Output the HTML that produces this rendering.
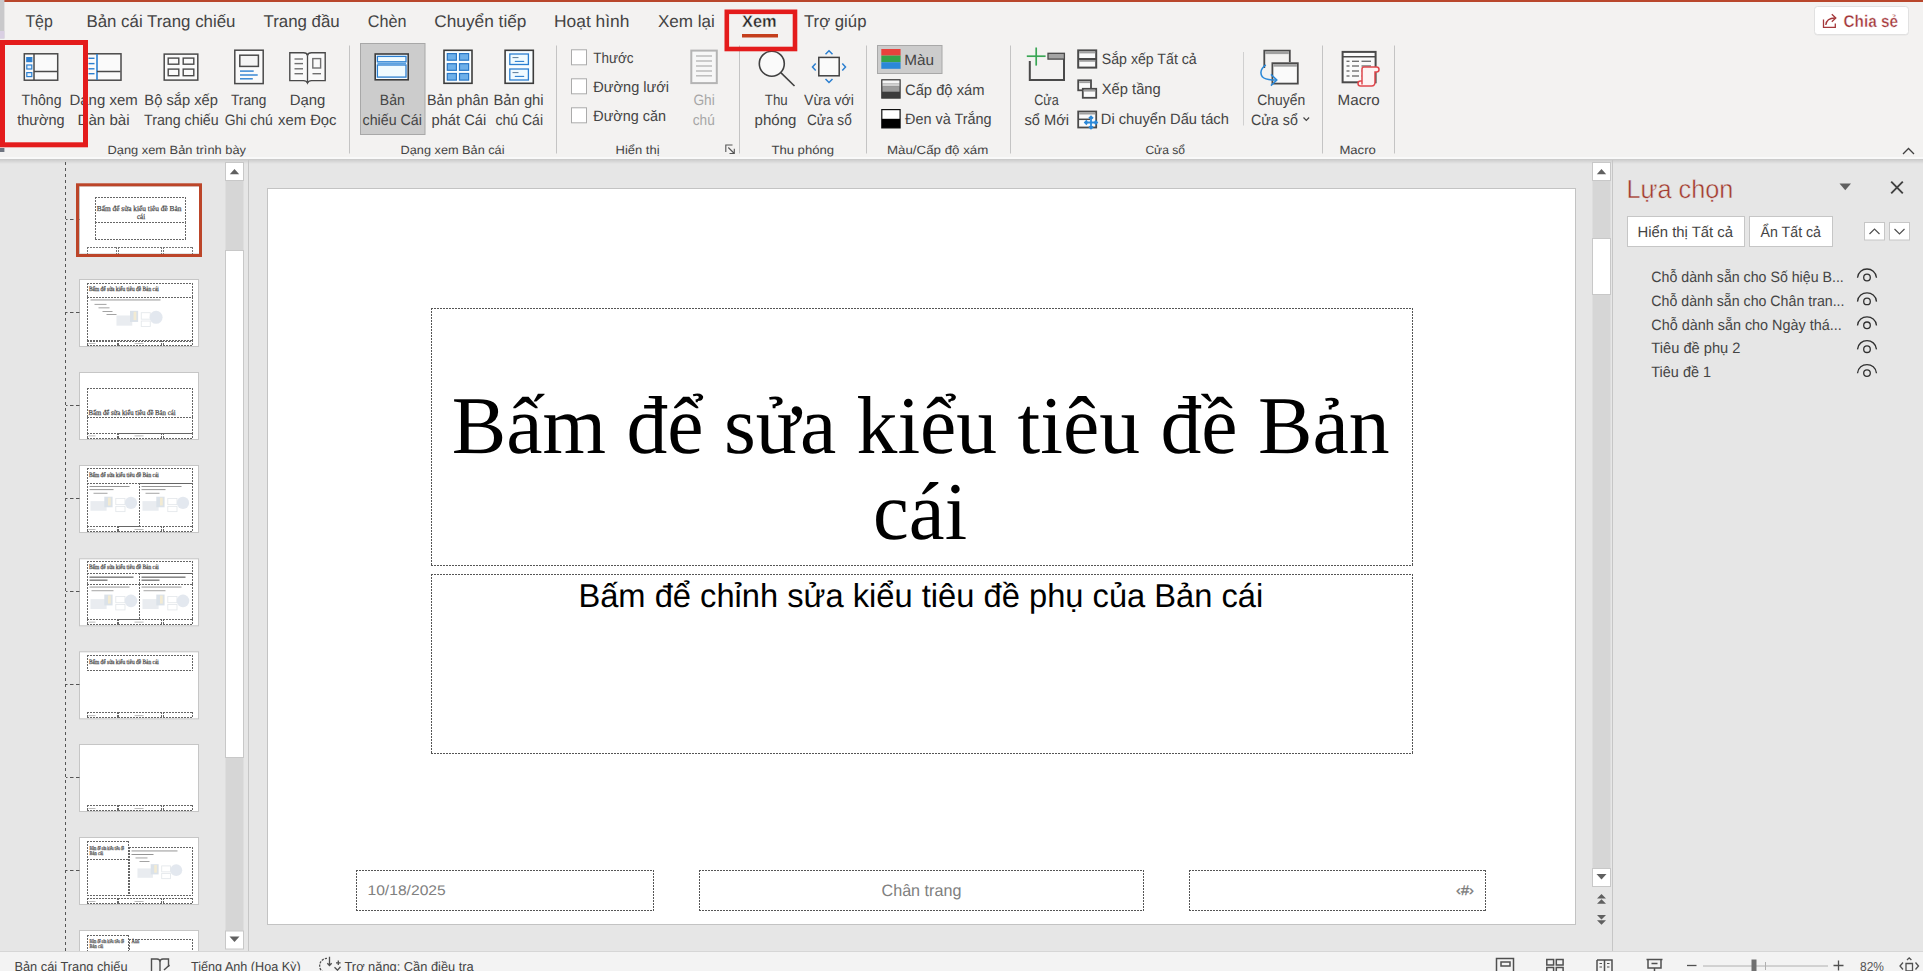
<!DOCTYPE html>
<html><head><meta charset="utf-8"><title>PowerPoint</title>
<style>
html,body{margin:0;padding:0;width:1923px;height:971px;overflow:hidden;background:#e6e6e6;font-family:"Liberation Sans", sans-serif;}
svg{position:absolute;left:0;top:0;display:block}
</style></head><body>
<svg width="1923" height="971" viewBox="0 0 1923 971" text-rendering="geometricPrecision">
<defs><linearGradient id="shadow" x1="0" y1="0" x2="0" y2="1"><stop offset="0" stop-color="#000" stop-opacity="0.13"/><stop offset="1" stop-color="#000" stop-opacity="0"/></linearGradient><linearGradient id="grayg" x1="0" y1="0" x2="0" y2="1"><stop offset="0" stop-color="#f0f0f0"/><stop offset="0.35" stop-color="#d8d8d8"/><stop offset="0.5" stop-color="#9a9a9a"/><stop offset="0.75" stop-color="#505050"/><stop offset="1" stop-color="#383838"/></linearGradient></defs>
<rect x="0" y="0" width="1923" height="159" fill="#f3f2f1" />
<rect x="0" y="157" width="1923" height="2" fill="#f9f9f9" />
<rect x="0" y="0" width="1923" height="2" fill="#b9472c" />
<rect x="0" y="159" width="1923" height="5" fill="url(#shadow)" />
<rect x="742" y="34" width="36" height="3.5" fill="#c43e1c" />
<line x1="349.5" y1="45.5" x2="349.5" y2="153.5" stroke="#c4c4c4" stroke-width="1" />
<line x1="556.5" y1="45.5" x2="556.5" y2="153.5" stroke="#c4c4c4" stroke-width="1" />
<line x1="739.5" y1="45.5" x2="739.5" y2="153.5" stroke="#c4c4c4" stroke-width="1" />
<line x1="866.5" y1="45.5" x2="866.5" y2="153.5" stroke="#c4c4c4" stroke-width="1" />
<line x1="1010.5" y1="45.5" x2="1010.5" y2="153.5" stroke="#c4c4c4" stroke-width="1" />
<line x1="1322.5" y1="45.5" x2="1322.5" y2="153.5" stroke="#c4c4c4" stroke-width="1" />
<line x1="1394.5" y1="45.5" x2="1394.5" y2="153.5" stroke="#c4c4c4" stroke-width="1" />
<line x1="1243.5" y1="52" x2="1243.5" y2="125.5" stroke="#d0d0d0" stroke-width="1" />
<rect x="24.3" y="53.8" width="33.4" height="26.4" fill="#fafafa" stroke="#4a4a4a" stroke-width="1.5" />
<line x1="34" y1="54" x2="34" y2="80" stroke="#4a4a4a" stroke-width="1.5" />
<line x1="34" y1="71.5" x2="57.5" y2="71.5" stroke="#4a4a4a" stroke-width="1.5" />
<rect x="26.8" y="57.6" width="5" height="4" fill="#2b7fd0" stroke="#2b7fd0" stroke-width="1.2" />
<rect x="26.8" y="65" width="5" height="4" fill="#e8f3fc" stroke="#2b7fd0" stroke-width="1.2" />
<rect x="26.8" y="72.6" width="5" height="4" fill="#e8f3fc" stroke="#2b7fd0" stroke-width="1.2" />
<rect x="86.8" y="53.8" width="34.2" height="26.4" fill="#fafafa" stroke="#4a4a4a" stroke-width="1.5" />
<line x1="97" y1="54" x2="97" y2="80" stroke="#2b7fd0" stroke-width="1.6" />
<line x1="97" y1="71.5" x2="120.5" y2="71.5" stroke="#4a4a4a" stroke-width="1.5" />
<line x1="88.5" y1="58.3" x2="94.5" y2="58.3" stroke="#2b7fd0" stroke-width="1.4" />
<line x1="88.5" y1="63.6" x2="94.5" y2="63.6" stroke="#2b7fd0" stroke-width="1.4" />
<line x1="88.5" y1="68.8" x2="94.5" y2="68.8" stroke="#2b7fd0" stroke-width="1.4" />
<line x1="88.5" y1="73.7" x2="94.5" y2="73.7" stroke="#2b7fd0" stroke-width="1.4" />
<rect x="164.2" y="54.1" width="33.6" height="26" fill="#fafafa" stroke="#4a4a4a" stroke-width="1.5" />
<rect x="168.2" y="58.1" width="10.6" height="6.1" fill="#fafafa" stroke="#4a4a4a" stroke-width="1.4" />
<rect x="183.2" y="58.1" width="10.6" height="6.1" fill="#fafafa" stroke="#4a4a4a" stroke-width="1.4" />
<rect x="168.2" y="69.1" width="10.6" height="6.6" fill="#fafafa" stroke="#4a4a4a" stroke-width="1.4" />
<rect x="183.2" y="69.1" width="10.6" height="6.6" fill="#fafafa" stroke="#4a4a4a" stroke-width="1.4" />
<rect x="234.8" y="50.2" width="28.4" height="33.4" fill="#fafafa" stroke="#4a4a4a" stroke-width="1.5" />
<rect x="239.8" y="55.2" width="18.6" height="11.2" fill="#f4f4f4" stroke="#4a4a4a" stroke-width="1.5" />
<line x1="240" y1="71.1" x2="253.7" y2="71.1" stroke="#2b7fd0" stroke-width="1.4" />
<line x1="240" y1="75" x2="257.7" y2="75" stroke="#2b7fd0" stroke-width="1.4" />
<line x1="240" y1="78.8" x2="252.8" y2="78.8" stroke="#2b7fd0" stroke-width="1.4" />
<path d="M289.8 52.8 H303.5 Q307 52.8 307.5 55.5 Q308 52.8 311.5 52.8 H325.2 V80.6 H311.5 Q308.5 80.6 307.5 83 Q306.5 80.6 303.5 80.6 H289.8 Z" stroke="#4a4a4a" fill="#fafafa" stroke-width="1.4" />
<line x1="307.5" y1="55.5" x2="307.5" y2="82.5" stroke="#4a4a4a" stroke-width="1.3" />
<line x1="294.5" y1="59" x2="303" y2="59" stroke="#707070" stroke-width="1.4" />
<line x1="294.5" y1="63.6" x2="303" y2="63.6" stroke="#707070" stroke-width="1.4" />
<line x1="294.5" y1="68.8" x2="303" y2="68.8" stroke="#707070" stroke-width="1.4" />
<line x1="294.5" y1="73.7" x2="303" y2="73.7" stroke="#707070" stroke-width="1.4" />
<rect x="312.8" y="58.6" width="7.8" height="9.4" fill="#fafafa" stroke="#707070" stroke-width="1.4" />
<line x1="312.5" y1="73.7" x2="321" y2="73.7" stroke="#707070" stroke-width="1.4" />
<rect x="360.5" y="43.5" width="64.5" height="91" fill="#cccccc" stroke="#a8a8a8" stroke-width="1" />
<rect x="375.2" y="54" width="33" height="25.8" fill="#f8fdff" stroke="#3c3c3c" stroke-width="1.6" />
<rect x="377.4" y="56.4" width="28.6" height="5.4" fill="#f0fbff" stroke="#2b7fd0" stroke-width="1.3" />
<rect x="377.4" y="62.6" width="28.6" height="1.6" fill="#5aa3e2" />
<rect x="377.4" y="65" width="28.6" height="12.1" fill="#f0fbff" stroke="#2b7fd0" stroke-width="1.3" />
<rect x="444" y="50.3" width="28" height="33" fill="#f8fdff" stroke="#3c3c3c" stroke-width="1.6" />
<rect x="447.3" y="53.6" width="9.1" height="6.6" fill="#6db0ea" stroke="#2a78c6" stroke-width="1.2" />
<rect x="447.3" y="63.7" width="9.1" height="6.6" fill="#6db0ea" stroke="#2a78c6" stroke-width="1.2" />
<rect x="447.3" y="73.5" width="9.1" height="6.6" fill="#6db0ea" stroke="#2a78c6" stroke-width="1.2" />
<rect x="459.5" y="53.6" width="9.1" height="6.6" fill="#6db0ea" stroke="#2a78c6" stroke-width="1.2" />
<rect x="459.5" y="63.7" width="9.1" height="6.6" fill="#6db0ea" stroke="#2a78c6" stroke-width="1.2" />
<rect x="459.5" y="73.5" width="9.1" height="6.6" fill="#6db0ea" stroke="#2a78c6" stroke-width="1.2" />
<rect x="505.1" y="50.3" width="28.2" height="33" fill="#f8fdff" stroke="#3c3c3c" stroke-width="1.6" />
<rect x="509.8" y="54" width="18.6" height="10.5" fill="#f0fbff" stroke="#2b7fd0" stroke-width="1.3" />
<rect x="509.8" y="69" width="18.6" height="11" fill="#f0fbff" stroke="#2b7fd0" stroke-width="1.3" />
<line x1="512.5" y1="57.6" x2="518.5" y2="57.6" stroke="#4a6c8c" stroke-width="0.9" />
<line x1="514.8" y1="61.4" x2="524.2" y2="61.4" stroke="#2b7fd0" stroke-width="1.1" />
<line x1="512.5" y1="72.6" x2="518.5" y2="72.6" stroke="#4a6c8c" stroke-width="0.9" />
<line x1="514.8" y1="76.39999999999999" x2="524.2" y2="76.39999999999999" stroke="#2b7fd0" stroke-width="1.1" />
<rect x="571.5" y="49.8" width="15" height="15" fill="#ffffff" stroke="#ababab" stroke-width="1" />
<rect x="571.5" y="78.8" width="15" height="15" fill="#ffffff" stroke="#ababab" stroke-width="1" />
<rect x="571.5" y="107.8" width="15" height="15" fill="#ffffff" stroke="#ababab" stroke-width="1" />
<rect x="691.3" y="50.6" width="25.5" height="32.5" fill="#f7f7f7" stroke="#b4b4b4" stroke-width="2" />
<line x1="696" y1="56" x2="712" y2="56" stroke="#b8b8b8" stroke-width="1.4" />
<line x1="696" y1="61" x2="712" y2="61" stroke="#b8b8b8" stroke-width="1.4" />
<line x1="696" y1="66" x2="712" y2="66" stroke="#b8b8b8" stroke-width="1.4" />
<line x1="696" y1="71" x2="712" y2="71" stroke="#b8b8b8" stroke-width="1.4" />
<line x1="696" y1="75.8" x2="712" y2="75.8" stroke="#b8b8b8" stroke-width="1.4" />
<path d="M725.8 152 V145 H732.5" stroke="#555" fill="none" stroke-width="1.1" />
<path d="M728.3 147.5 L734.3 153.5 M734.3 148.7 V153.5 H729.5" stroke="#555" fill="none" stroke-width="1.1" />
<circle cx="771.8" cy="63.7" r="12.5" fill="#fafafa" stroke="#404040" stroke-width="1.6"/>
<line x1="780.8" y1="72.6" x2="794.5" y2="86" stroke="#404040" stroke-width="1.6" />
<rect x="818.8" y="57.4" width="20.4" height="18.4" fill="#fafafa" stroke="#404040" stroke-width="1.5" />
<path d="M825.5 54.3 L829 50.8 L832.5 54.3 M825.5 79 L829 82.5 L832.5 79 M815.7 63.5 L812.5 67 L815.7 70.5 M842.3 63.5 L845.5 67 L842.3 70.5" stroke="#2b7fd0" fill="none" stroke-width="1.5" />
<rect x="877.5" y="45.5" width="64.5" height="28" fill="#cccccc" stroke="#a8a8a8" stroke-width="1" />
<rect x="881.3" y="49" width="19.3" height="6.6" fill="#e8413c" />
<rect x="881.3" y="55.6" width="19.3" height="6.6" fill="#36a24a" />
<rect x="881.3" y="62.2" width="19.3" height="6.6" fill="#2b88d8" />
<rect x="881.8" y="79.8" width="18.3" height="18.3" fill="#3c3c3c" stroke="#3a3a3a" stroke-width="1.2" />
<rect x="882.4" y="80.4" width="17.1" height="3.3" fill="#f4f4f4" />
<rect x="882.4" y="83.7" width="17.1" height="2.9" fill="#cfcfcf" />
<rect x="882.4" y="86.6" width="17.1" height="5.1" fill="#9c9c9c" />
<rect x="881.8" y="109.6" width="18.3" height="18.3" fill="#ffffff" stroke="#111" stroke-width="1.2" />
<rect x="881.8" y="118.8" width="18.3" height="9.1" fill="#000" />
<path d="M1029.8 61 V80 H1064 V54 H1048" stroke="#4a4a4a" fill="none" stroke-width="2" />
<rect x="1048" y="53.3" width="16.4" height="5.8" fill="#a4a4a4" stroke="#4a4a4a" stroke-width="1.3" />
<line x1="1026.8" y1="56.2" x2="1045.6" y2="56.2" stroke="#3aa655" stroke-width="1.7" />
<line x1="1036.2" y1="47.5" x2="1036.2" y2="65.6" stroke="#3aa655" stroke-width="1.7" />
<rect x="1078.2" y="50.4" width="18" height="17.2" fill="#fafafa" stroke="#4a4a4a" stroke-width="2" />
<rect x="1079.2" y="51.4" width="16" height="2" fill="#a0a0a0" />
<line x1="1078.2" y1="59" x2="1096.2" y2="59" stroke="#4a4a4a" stroke-width="2" />
<rect x="1079.2" y="60" width="16" height="1.8" fill="#a0a0a0" />
<rect x="1078.2" y="80.3" width="12.8" height="10" fill="#fafafa" stroke="#4a4a4a" stroke-width="1.8" />
<rect x="1079.2" y="81.3" width="10.8" height="1.8" fill="#a0a0a0" />
<rect x="1082.8" y="88.8" width="13.4" height="9" fill="#fafafa" stroke="#4a4a4a" stroke-width="1.8" />
<rect x="1083.8" y="89.8" width="11.4" height="1.8" fill="#a0a0a0" />
<rect x="1078.2" y="111.5" width="18" height="16" fill="#fafafa" stroke="#4a4a4a" stroke-width="1.8" />
<rect x="1079.2" y="112.5" width="16" height="2" fill="#a0a0a0" />
<line x1="1078.2" y1="119.3" x2="1090" y2="119.3" stroke="#4a4a4a" stroke-width="1.5" />
<path d="M1091 116.5 V128.5 M1085 122.5 H1097 M1089 118.5 L1091 116.5 L1093 118.5 M1089 126.5 L1091 128.5 L1093 126.5 M1087 120.5 L1085 122.5 L1087 124.5 M1095 120.5 L1097 122.5 L1095 124.5" stroke="#2b88d8" fill="none" stroke-width="1.8" />
<path d="M1264.3 68 V50.6 H1289.8 V62" stroke="#4a4a4a" fill="none" stroke-width="1.8" />
<rect x="1265.2" y="51.5" width="23.6" height="2.6" fill="#a0a0a0" />
<rect x="1272.4" y="63.2" width="25.4" height="20.4" fill="#fafafa" stroke="#4a4a4a" stroke-width="1.8" />
<rect x="1273.3" y="64.1" width="23.6" height="2.6" fill="#a0a0a0" />
<path d="M1265.8 64.8 Q1258.3 70.5 1262.3 76.8 Q1265.5 80.3 1276.3 80" stroke="#2b88d8" fill="none" stroke-width="1.5" />
<path d="M1270.9 74.4 L1276.8 80 L1270.9 85.6" stroke="#2b88d8" fill="none" stroke-width="1.5" />
<path d="M1303.5 117.5 L1306.3 120.3 L1309.1 117.5" stroke="#444" fill="none" stroke-width="1.2" />
<rect x="1342.6" y="51.9" width="33" height="30.4" fill="#fafafa" stroke="#4a4a4a" stroke-width="2" />
<line x1="1342.6" y1="56.8" x2="1375.6" y2="56.8" stroke="#4a4a4a" stroke-width="1.6" />
<line x1="1346.5" y1="61.3" x2="1349.5" y2="61.3" stroke="#707070" stroke-width="1.4" />
<line x1="1352" y1="61.3" x2="1359" y2="61.3" stroke="#707070" stroke-width="1.4" />
<line x1="1361.5" y1="61.3" x2="1371" y2="61.3" stroke="#707070" stroke-width="1.4" />
<line x1="1346.5" y1="66" x2="1349.5" y2="66" stroke="#707070" stroke-width="1.4" />
<line x1="1352" y1="66" x2="1359" y2="66" stroke="#707070" stroke-width="1.4" />
<line x1="1361.5" y1="66" x2="1371" y2="66" stroke="#707070" stroke-width="1.4" />
<line x1="1346.5" y1="71" x2="1349.5" y2="71" stroke="#707070" stroke-width="1.4" />
<line x1="1352" y1="71" x2="1359" y2="71" stroke="#707070" stroke-width="1.4" />
<line x1="1361.5" y1="71" x2="1371" y2="71" stroke="#707070" stroke-width="1.4" />
<line x1="1346.5" y1="76" x2="1349.5" y2="76" stroke="#707070" stroke-width="1.4" />
<line x1="1352" y1="76" x2="1359" y2="76" stroke="#707070" stroke-width="1.4" />
<line x1="1361.5" y1="76" x2="1371" y2="76" stroke="#707070" stroke-width="1.4" />
<path d="M1362 84.5 V69 Q1362 67 1364 67 H1376.5 Q1379 67 1379 69.5 Q1379 72 1376.5 72 H1375 V82 Q1375 86 1371.5 86 H1360.5 Q1358 86 1358 83.5 Q1358 81 1360.5 81 H1362" stroke="#e0474c" fill="#fdf3f3" stroke-width="1.5" />
<rect x="1814.5" y="7" width="94" height="28.5" rx="3" fill="#000" opacity="0.06"/>
<rect x="1814.5" y="6.5" width="94" height="28" rx="3" fill="#ffffff" stroke="#e1e1e1" stroke-width="1"/>
<path d="M1823.5 19.5 V27.3 H1835.3 V23.5" stroke="#a4373a" fill="none" stroke-width="1.3" />
<path d="M1825.8 25 Q1826.5 18 1835 18" stroke="#a4373a" fill="none" stroke-width="1.3" />
<path d="M1831.8 14.3 L1835.8 18 L1831.8 21.7" stroke="#a4373a" fill="none" stroke-width="1.3" />
<path d="M1903 154 L1908.5 148.5 L1914 154" stroke="#404040" fill="none" stroke-width="1.3" />
<line x1="65.5" y1="161" x2="65.5" y2="951" stroke="#555" stroke-width="1" stroke-dasharray="3 3" stroke-dashoffset="5"/>
<rect x="248" y="160" width="1" height="791" fill="#c6c6c6" />
<rect x="225.5" y="181" width="18" height="750" fill="#d6d6d6" />
<rect x="225.5" y="162.5" width="18" height="18" fill="#ffffff" stroke="#c8c8c8" stroke-width="1" />
<path d="M229.8 174.3 L234.5 169 L239.2 174.3 Z" stroke="none" fill="#606060" stroke-width="1" />
<rect x="225.5" y="250.5" width="18" height="507" fill="#ffffff" stroke="#c8c8c8" stroke-width="1" />
<rect x="225.5" y="931" width="18" height="18" fill="#ffffff" stroke="#c8c8c8" stroke-width="1" />
<path d="M229.5 936.5 L234.5 942 L239.5 936.5 Z" stroke="none" fill="#606060" stroke-width="1" />
<rect x="79.5" y="186" width="120" height="68" fill="#ffffff" stroke="#c6c6c6" stroke-width="1" />
<line x1="66" y1="219.5" x2="79.5" y2="219.5" stroke="#555" stroke-width="1" stroke-dasharray="1.5 2.5 3.5 2.5 3.5"/>
<rect x="79.5" y="279.5" width="119" height="67" fill="#ffffff" stroke="#c6c6c6" stroke-width="1" />
<line x1="66" y1="312.5" x2="79.5" y2="312.5" stroke="#555" stroke-width="1" stroke-dasharray="1.5 2.5 3.5 2.5 3.5"/>
<rect x="79.5" y="372.5" width="119" height="67" fill="#ffffff" stroke="#c6c6c6" stroke-width="1" />
<line x1="66" y1="405.5" x2="79.5" y2="405.5" stroke="#555" stroke-width="1" stroke-dasharray="1.5 2.5 3.5 2.5 3.5"/>
<rect x="79.5" y="465.5" width="119" height="67" fill="#ffffff" stroke="#c6c6c6" stroke-width="1" />
<line x1="66" y1="498.5" x2="79.5" y2="498.5" stroke="#555" stroke-width="1" stroke-dasharray="1.5 2.5 3.5 2.5 3.5"/>
<rect x="79.5" y="558.8" width="119" height="67" fill="#ffffff" stroke="#c6c6c6" stroke-width="1" />
<line x1="66" y1="591.5" x2="79.5" y2="591.5" stroke="#555" stroke-width="1" stroke-dasharray="1.5 2.5 3.5 2.5 3.5"/>
<rect x="79.5" y="651.8" width="119" height="67" fill="#ffffff" stroke="#c6c6c6" stroke-width="1" />
<line x1="66" y1="684.5" x2="79.5" y2="684.5" stroke="#555" stroke-width="1" stroke-dasharray="1.5 2.5 3.5 2.5 3.5"/>
<rect x="79.5" y="744.5" width="119" height="67" fill="#ffffff" stroke="#c6c6c6" stroke-width="1" />
<line x1="66" y1="777.5" x2="79.5" y2="777.5" stroke="#555" stroke-width="1" stroke-dasharray="1.5 2.5 3.5 2.5 3.5"/>
<rect x="79.5" y="837.5" width="119" height="67" fill="#ffffff" stroke="#c6c6c6" stroke-width="1" />
<line x1="66" y1="870.5" x2="79.5" y2="870.5" stroke="#555" stroke-width="1" stroke-dasharray="1.5 2.5 3.5 2.5 3.5"/>
<rect x="79.5" y="930.5" width="119" height="67" fill="#ffffff" stroke="#c6c6c6" stroke-width="1" />
<line x1="66" y1="963.5" x2="79.5" y2="963.5" stroke="#555" stroke-width="1" stroke-dasharray="1.5 2.5 3.5 2.5 3.5"/>
<g stroke="#666" stroke-width="1" fill="none" stroke-dasharray="2 1"><line x1="95" y1="197.5" x2="186" y2="197.5"/><line x1="95" y1="222.5" x2="186" y2="222.5"/><line x1="95.5" y1="197" x2="95.5" y2="223"/><line x1="185.5" y1="197" x2="185.5" y2="223"/></g>
<g stroke="#666" stroke-width="1" fill="none" stroke-dasharray="2 1"><line x1="95" y1="222.5" x2="186" y2="222.5"/><line x1="95" y1="239.5" x2="186" y2="239.5"/><line x1="95.5" y1="222" x2="95.5" y2="240"/><line x1="185.5" y1="222" x2="185.5" y2="240"/></g>
<g stroke="#777" stroke-width="1" fill="none" stroke-dasharray="2 1"><line x1="87" y1="247.5" x2="117" y2="247.5"/><line x1="87" y1="256.5" x2="117" y2="256.5"/><line x1="87.5" y1="247" x2="87.5" y2="257"/><line x1="116.5" y1="247" x2="116.5" y2="257"/></g>
<g stroke="#777" stroke-width="1" fill="none" stroke-dasharray="2 1"><line x1="118" y1="247.5" x2="162" y2="247.5"/><line x1="118" y1="256.5" x2="162" y2="256.5"/><line x1="118.5" y1="247" x2="118.5" y2="257"/><line x1="161.5" y1="247" x2="161.5" y2="257"/></g>
<g stroke="#777" stroke-width="1" fill="none" stroke-dasharray="2 1"><line x1="163" y1="247.5" x2="193" y2="247.5"/><line x1="163" y1="256.5" x2="193" y2="256.5"/><line x1="163.5" y1="247" x2="163.5" y2="257"/><line x1="192.5" y1="247" x2="192.5" y2="257"/></g>
<g stroke="#666" stroke-width="1" fill="none" stroke-dasharray="2 1"><line x1="87" y1="283.5" x2="193" y2="283.5"/><line x1="87" y1="297.5" x2="193" y2="297.5"/><line x1="87.5" y1="283" x2="87.5" y2="298"/><line x1="192.5" y1="283" x2="192.5" y2="298"/></g>
<g stroke="#666" stroke-width="1" fill="none" stroke-dasharray="2 1"><line x1="87" y1="297.5" x2="193" y2="297.5"/><line x1="87" y1="341.5" x2="193" y2="341.5"/><line x1="87.5" y1="297" x2="87.5" y2="342"/><line x1="192.5" y1="297" x2="192.5" y2="342"/></g>
<rect x="90.5" y="299.5" width="70" height="0.9" fill="#8a8a8a" />
<rect x="94.5" y="303.9" width="12" height="0.9" fill="#9a9a9a" />
<rect x="98.5" y="307.4" width="11" height="0.9" fill="#9a9a9a" />
<rect x="102.5" y="311.0" width="10" height="0.9" fill="#9a9a9a" />
<rect x="106.5" y="314.0" width="10" height="0.9" fill="#9a9a9a" />
<g opacity="0.5"><rect x="116.5" y="315.475" width="15.749999999999998" height="10.175" fill="#d4dbe3"/><rect x="130.0" y="310.85" width="8.1" height="11.1" fill="#b9c6d4"/><rect x="133.6" y="311.775" width="2.6999999999999997" height="8.325000000000001" fill="#e8d9a8"/><rect x="141.25" y="312.7" width="9.0" height="6.475" fill="none" stroke="#c8d0d8" stroke-width="0.8"/><rect x="141.25" y="321.025" width="9.0" height="5.55" fill="none" stroke="#c8d0d8" stroke-width="0.8"/><circle cx="156.1" cy="317.325" r="6.475" fill="#c9d3e0"/></g>
<g stroke="#666" stroke-width="1" fill="none" stroke-dasharray="2 1"><line x1="87" y1="340.5" x2="118" y2="340.5"/><line x1="87" y1="345.5" x2="118" y2="345.5"/><line x1="87.5" y1="340" x2="87.5" y2="346"/><line x1="117.5" y1="340" x2="117.5" y2="346"/></g>
<g stroke="#666" stroke-width="1" fill="none" stroke-dasharray="2 1"><line x1="118" y1="340.5" x2="162" y2="340.5"/><line x1="118" y1="345.5" x2="162" y2="345.5"/><line x1="118.5" y1="340" x2="118.5" y2="346"/><line x1="161.5" y1="340" x2="161.5" y2="346"/></g>
<g stroke="#666" stroke-width="1" fill="none" stroke-dasharray="2 1"><line x1="163" y1="340.5" x2="193" y2="340.5"/><line x1="163" y1="345.5" x2="193" y2="345.5"/><line x1="163.5" y1="340" x2="163.5" y2="346"/><line x1="192.5" y1="340" x2="192.5" y2="346"/></g>
<rect x="88.5" y="343.0" width="7" height="0.8" fill="#aaa" />
<rect x="134.5" y="343.0" width="9" height="0.8" fill="#aaa" />
<g stroke="#666" stroke-width="1" fill="none" stroke-dasharray="2 1"><line x1="87" y1="388.5" x2="193" y2="388.5"/><line x1="87" y1="417.5" x2="193" y2="417.5"/><line x1="87.5" y1="388" x2="87.5" y2="418"/><line x1="192.5" y1="388" x2="192.5" y2="418"/></g>
<g stroke="#666" stroke-width="1" fill="none" stroke-dasharray="2 1"><line x1="87" y1="417.5" x2="193" y2="417.5"/><line x1="87" y1="433.5" x2="193" y2="433.5"/><line x1="87.5" y1="417" x2="87.5" y2="434"/><line x1="192.5" y1="417" x2="192.5" y2="434"/></g>
<g stroke="#666" stroke-width="1" fill="none" stroke-dasharray="2 1"><line x1="87" y1="433.5" x2="118" y2="433.5"/><line x1="87" y1="438.5" x2="118" y2="438.5"/><line x1="87.5" y1="433" x2="87.5" y2="439"/><line x1="117.5" y1="433" x2="117.5" y2="439"/></g>
<g stroke="#666" stroke-width="1" fill="none" stroke-dasharray="2 1"><line x1="118" y1="433.5" x2="162" y2="433.5"/><line x1="118" y1="438.5" x2="162" y2="438.5"/><line x1="118.5" y1="433" x2="118.5" y2="439"/><line x1="161.5" y1="433" x2="161.5" y2="439"/></g>
<g stroke="#666" stroke-width="1" fill="none" stroke-dasharray="2 1"><line x1="163" y1="433.5" x2="193" y2="433.5"/><line x1="163" y1="438.5" x2="193" y2="438.5"/><line x1="163.5" y1="433" x2="163.5" y2="439"/><line x1="192.5" y1="433" x2="192.5" y2="439"/></g>
<rect x="88.5" y="435.5" width="7" height="0.8" fill="#aaa" />
<rect x="134.5" y="435.5" width="9" height="0.8" fill="#aaa" />
<g stroke="#666" stroke-width="1" fill="none" stroke-dasharray="2 1"><line x1="87" y1="468.5" x2="193" y2="468.5"/><line x1="87" y1="483.5" x2="193" y2="483.5"/><line x1="87.5" y1="468" x2="87.5" y2="484"/><line x1="192.5" y1="468" x2="192.5" y2="484"/></g>
<g stroke="#666" stroke-width="1" fill="none" stroke-dasharray="2 1"><line x1="87" y1="483.5" x2="140" y2="483.5"/><line x1="87" y1="526.5" x2="140" y2="526.5"/><line x1="87.5" y1="483" x2="87.5" y2="527"/><line x1="139.5" y1="483" x2="139.5" y2="527"/></g>
<g stroke="#666" stroke-width="1" fill="none" stroke-dasharray="2 1"><line x1="139" y1="483.5" x2="193" y2="483.5"/><line x1="139" y1="526.5" x2="193" y2="526.5"/><line x1="139.5" y1="483" x2="139.5" y2="527"/><line x1="192.5" y1="483" x2="192.5" y2="527"/></g>
<rect x="89.5" y="486.0" width="40" height="0.9" fill="#8a8a8a" />
<rect x="89.5" y="489.2" width="24" height="0.9" fill="#8a8a8a" />
<rect x="93.5" y="492.8" width="14" height="0.9" fill="#9a9a9a" />
<g opacity="0.5"><rect x="90.5" y="501.125" width="16.099999999999998" height="9.625" fill="#d4dbe3"/><rect x="104.3" y="496.75" width="8.28" height="10.5" fill="#b9c6d4"/><rect x="107.98" y="497.625" width="2.76" height="7.875" fill="#e8d9a8"/><rect x="115.8" y="498.5" width="9.200000000000001" height="6.125" fill="none" stroke="#c8d0d8" stroke-width="0.8"/><rect x="115.8" y="506.375" width="9.200000000000001" height="5.25" fill="none" stroke="#c8d0d8" stroke-width="0.8"/><circle cx="130.98" cy="502.875" r="6.125" fill="#c9d3e0"/></g>
<rect x="141.5" y="486.0" width="40" height="0.9" fill="#8a8a8a" />
<rect x="141.5" y="489.2" width="24" height="0.9" fill="#8a8a8a" />
<rect x="145.5" y="492.8" width="14" height="0.9" fill="#9a9a9a" />
<g opacity="0.5"><rect x="142.5" y="501.125" width="16.099999999999998" height="9.625" fill="#d4dbe3"/><rect x="156.3" y="496.75" width="8.28" height="10.5" fill="#b9c6d4"/><rect x="159.98" y="497.625" width="2.76" height="7.875" fill="#e8d9a8"/><rect x="167.8" y="498.5" width="9.200000000000001" height="6.125" fill="none" stroke="#c8d0d8" stroke-width="0.8"/><rect x="167.8" y="506.375" width="9.200000000000001" height="5.25" fill="none" stroke="#c8d0d8" stroke-width="0.8"/><circle cx="182.98" cy="502.875" r="6.125" fill="#c9d3e0"/></g>
<g stroke="#666" stroke-width="1" fill="none" stroke-dasharray="2 1"><line x1="87" y1="526.5" x2="118" y2="526.5"/><line x1="87" y1="531.5" x2="118" y2="531.5"/><line x1="87.5" y1="526" x2="87.5" y2="532"/><line x1="117.5" y1="526" x2="117.5" y2="532"/></g>
<g stroke="#666" stroke-width="1" fill="none" stroke-dasharray="2 1"><line x1="118" y1="526.5" x2="162" y2="526.5"/><line x1="118" y1="531.5" x2="162" y2="531.5"/><line x1="118.5" y1="526" x2="118.5" y2="532"/><line x1="161.5" y1="526" x2="161.5" y2="532"/></g>
<g stroke="#666" stroke-width="1" fill="none" stroke-dasharray="2 1"><line x1="163" y1="526.5" x2="193" y2="526.5"/><line x1="163" y1="531.5" x2="193" y2="531.5"/><line x1="163.5" y1="526" x2="163.5" y2="532"/><line x1="192.5" y1="526" x2="192.5" y2="532"/></g>
<rect x="88.5" y="529.0" width="7" height="0.8" fill="#aaa" />
<rect x="134.5" y="529.0" width="9" height="0.8" fill="#aaa" />
<g stroke="#666" stroke-width="1" fill="none" stroke-dasharray="2 1"><line x1="87" y1="561.5" x2="193" y2="561.5"/><line x1="87" y1="573.5" x2="193" y2="573.5"/><line x1="87.5" y1="561" x2="87.5" y2="574"/><line x1="192.5" y1="561" x2="192.5" y2="574"/></g>
<g stroke="#666" stroke-width="1" fill="none" stroke-dasharray="2 1"><line x1="87" y1="573.5" x2="140" y2="573.5"/><line x1="87" y1="584.5" x2="140" y2="584.5"/><line x1="87.5" y1="573" x2="87.5" y2="585"/><line x1="139.5" y1="573" x2="139.5" y2="585"/></g>
<g stroke="#666" stroke-width="1" fill="none" stroke-dasharray="2 1"><line x1="139" y1="573.5" x2="193" y2="573.5"/><line x1="139" y1="584.5" x2="193" y2="584.5"/><line x1="139.5" y1="573" x2="139.5" y2="585"/><line x1="192.5" y1="573" x2="192.5" y2="585"/></g>
<g stroke="#666" stroke-width="1" fill="none" stroke-dasharray="2 1"><line x1="87" y1="584.5" x2="140" y2="584.5"/><line x1="87" y1="619.5" x2="140" y2="619.5"/><line x1="87.5" y1="584" x2="87.5" y2="620"/><line x1="139.5" y1="584" x2="139.5" y2="620"/></g>
<g stroke="#666" stroke-width="1" fill="none" stroke-dasharray="2 1"><line x1="139" y1="584.5" x2="193" y2="584.5"/><line x1="139" y1="619.5" x2="193" y2="619.5"/><line x1="139.5" y1="584" x2="139.5" y2="620"/><line x1="192.5" y1="584" x2="192.5" y2="620"/></g>
<rect x="89.5" y="576.5999999999999" width="44" height="1.1" fill="#555" />
<rect x="89.5" y="579.5999999999999" width="18" height="1.1" fill="#555" />
<rect x="89.5" y="586.5999999999999" width="40" height="0.9" fill="#8a8a8a" />
<rect x="91.5" y="590.3" width="22" height="0.9" fill="#9a9a9a" />
<g opacity="0.5"><rect x="90.5" y="599.0999999999999" width="16.099999999999998" height="9.9" fill="#d4dbe3"/><rect x="104.3" y="594.5999999999999" width="8.28" height="10.799999999999999" fill="#b9c6d4"/><rect x="107.98" y="595.5" width="2.76" height="8.1" fill="#e8d9a8"/><rect x="115.8" y="596.4" width="9.200000000000001" height="6.3" fill="none" stroke="#c8d0d8" stroke-width="0.8"/><rect x="115.8" y="604.5" width="9.200000000000001" height="5.3999999999999995" fill="none" stroke="#c8d0d8" stroke-width="0.8"/><circle cx="130.98" cy="600.9" r="6.3" fill="#c9d3e0"/></g>
<rect x="141.5" y="576.5999999999999" width="44" height="1.1" fill="#555" />
<rect x="141.5" y="579.5999999999999" width="18" height="1.1" fill="#555" />
<rect x="141.5" y="586.5999999999999" width="40" height="0.9" fill="#8a8a8a" />
<rect x="143.5" y="590.3" width="22" height="0.9" fill="#9a9a9a" />
<g opacity="0.5"><rect x="142.5" y="599.0999999999999" width="16.099999999999998" height="9.9" fill="#d4dbe3"/><rect x="156.3" y="594.5999999999999" width="8.28" height="10.799999999999999" fill="#b9c6d4"/><rect x="159.98" y="595.5" width="2.76" height="8.1" fill="#e8d9a8"/><rect x="167.8" y="596.4" width="9.200000000000001" height="6.3" fill="none" stroke="#c8d0d8" stroke-width="0.8"/><rect x="167.8" y="604.5" width="9.200000000000001" height="5.3999999999999995" fill="none" stroke="#c8d0d8" stroke-width="0.8"/><circle cx="182.98" cy="600.9" r="6.3" fill="#c9d3e0"/></g>
<g stroke="#666" stroke-width="1" fill="none" stroke-dasharray="2 1"><line x1="87" y1="619.5" x2="118" y2="619.5"/><line x1="87" y1="624.5" x2="118" y2="624.5"/><line x1="87.5" y1="619" x2="87.5" y2="625"/><line x1="117.5" y1="619" x2="117.5" y2="625"/></g>
<g stroke="#666" stroke-width="1" fill="none" stroke-dasharray="2 1"><line x1="118" y1="619.5" x2="162" y2="619.5"/><line x1="118" y1="624.5" x2="162" y2="624.5"/><line x1="118.5" y1="619" x2="118.5" y2="625"/><line x1="161.5" y1="619" x2="161.5" y2="625"/></g>
<g stroke="#666" stroke-width="1" fill="none" stroke-dasharray="2 1"><line x1="163" y1="619.5" x2="193" y2="619.5"/><line x1="163" y1="624.5" x2="193" y2="624.5"/><line x1="163.5" y1="619" x2="163.5" y2="625"/><line x1="192.5" y1="619" x2="192.5" y2="625"/></g>
<rect x="88.5" y="621.6999999999999" width="7" height="0.8" fill="#aaa" />
<rect x="134.5" y="621.6999999999999" width="9" height="0.8" fill="#aaa" />
<g stroke="#666" stroke-width="1" fill="none" stroke-dasharray="2 1"><line x1="87" y1="655.5" x2="193" y2="655.5"/><line x1="87" y1="670.5" x2="193" y2="670.5"/><line x1="87.5" y1="655" x2="87.5" y2="671"/><line x1="192.5" y1="655" x2="192.5" y2="671"/></g>
<g stroke="#666" stroke-width="1" fill="none" stroke-dasharray="2 1"><line x1="87" y1="712.5" x2="118" y2="712.5"/><line x1="87" y1="717.5" x2="118" y2="717.5"/><line x1="87.5" y1="712" x2="87.5" y2="718"/><line x1="117.5" y1="712" x2="117.5" y2="718"/></g>
<g stroke="#666" stroke-width="1" fill="none" stroke-dasharray="2 1"><line x1="118" y1="712.5" x2="162" y2="712.5"/><line x1="118" y1="717.5" x2="162" y2="717.5"/><line x1="118.5" y1="712" x2="118.5" y2="718"/><line x1="161.5" y1="712" x2="161.5" y2="718"/></g>
<g stroke="#666" stroke-width="1" fill="none" stroke-dasharray="2 1"><line x1="163" y1="712.5" x2="193" y2="712.5"/><line x1="163" y1="717.5" x2="193" y2="717.5"/><line x1="163.5" y1="712" x2="163.5" y2="718"/><line x1="192.5" y1="712" x2="192.5" y2="718"/></g>
<rect x="88.5" y="715.3" width="7" height="0.8" fill="#aaa" />
<rect x="134.5" y="715.3" width="9" height="0.8" fill="#aaa" />
<g stroke="#666" stroke-width="1" fill="none" stroke-dasharray="2 1"><line x1="87" y1="805.5" x2="118" y2="805.5"/><line x1="87" y1="810.5" x2="118" y2="810.5"/><line x1="87.5" y1="805" x2="87.5" y2="811"/><line x1="117.5" y1="805" x2="117.5" y2="811"/></g>
<g stroke="#666" stroke-width="1" fill="none" stroke-dasharray="2 1"><line x1="118" y1="805.5" x2="162" y2="805.5"/><line x1="118" y1="810.5" x2="162" y2="810.5"/><line x1="118.5" y1="805" x2="118.5" y2="811"/><line x1="161.5" y1="805" x2="161.5" y2="811"/></g>
<g stroke="#666" stroke-width="1" fill="none" stroke-dasharray="2 1"><line x1="163" y1="805.5" x2="193" y2="805.5"/><line x1="163" y1="810.5" x2="193" y2="810.5"/><line x1="163.5" y1="805" x2="163.5" y2="811"/><line x1="192.5" y1="805" x2="192.5" y2="811"/></g>
<rect x="88.5" y="808.0" width="7" height="0.8" fill="#aaa" />
<rect x="134.5" y="808.0" width="9" height="0.8" fill="#aaa" />
<g stroke="#666" stroke-width="1" fill="none" stroke-dasharray="2 1"><line x1="87" y1="841.5" x2="129" y2="841.5"/><line x1="87" y1="859.5" x2="129" y2="859.5"/><line x1="87.5" y1="841" x2="87.5" y2="860"/><line x1="128.5" y1="841" x2="128.5" y2="860"/></g>
<g stroke="#666" stroke-width="1" fill="none" stroke-dasharray="2 1"><line x1="87" y1="859.5" x2="129" y2="859.5"/><line x1="87" y1="895.5" x2="129" y2="895.5"/><line x1="87.5" y1="859" x2="87.5" y2="896"/><line x1="128.5" y1="859" x2="128.5" y2="896"/></g>
<g stroke="#666" stroke-width="1" fill="none" stroke-dasharray="2 1"><line x1="129" y1="847.5" x2="193" y2="847.5"/><line x1="129" y1="895.5" x2="193" y2="895.5"/><line x1="129.5" y1="847" x2="129.5" y2="896"/><line x1="192.5" y1="847" x2="192.5" y2="896"/></g>
<rect x="131.5" y="850.5" width="46" height="0.9" fill="#8a8a8a" />
<rect x="131.5" y="854.0" width="22" height="0.9" fill="#8a8a8a" />
<rect x="135.5" y="857.5" width="12" height="0.9" fill="#9a9a9a" />
<rect x="139.5" y="861.0" width="10" height="0.9" fill="#9a9a9a" />
<g opacity="0.5"><rect x="137.5" y="868.45" width="15.399999999999999" height="9.350000000000001" fill="#d4dbe3"/><rect x="150.7" y="864.2" width="7.92" height="10.2" fill="#b9c6d4"/><rect x="154.22" y="865.05" width="2.6399999999999997" height="7.65" fill="#e8d9a8"/><rect x="161.7" y="865.9" width="8.8" height="5.949999999999999" fill="none" stroke="#c8d0d8" stroke-width="0.8"/><rect x="161.7" y="873.55" width="8.8" height="5.1" fill="none" stroke="#c8d0d8" stroke-width="0.8"/><circle cx="176.22" cy="870.15" r="5.949999999999999" fill="#c9d3e0"/></g>
<g stroke="#666" stroke-width="1" fill="none" stroke-dasharray="2 1"><line x1="87" y1="898.5" x2="118" y2="898.5"/><line x1="87" y1="903.5" x2="118" y2="903.5"/><line x1="87.5" y1="898" x2="87.5" y2="904"/><line x1="117.5" y1="898" x2="117.5" y2="904"/></g>
<g stroke="#666" stroke-width="1" fill="none" stroke-dasharray="2 1"><line x1="118" y1="898.5" x2="162" y2="898.5"/><line x1="118" y1="903.5" x2="162" y2="903.5"/><line x1="118.5" y1="898" x2="118.5" y2="904"/><line x1="161.5" y1="898" x2="161.5" y2="904"/></g>
<g stroke="#666" stroke-width="1" fill="none" stroke-dasharray="2 1"><line x1="163" y1="898.5" x2="193" y2="898.5"/><line x1="163" y1="903.5" x2="193" y2="903.5"/><line x1="163.5" y1="898" x2="163.5" y2="904"/><line x1="192.5" y1="898" x2="192.5" y2="904"/></g>
<rect x="88.5" y="901.0" width="7" height="0.8" fill="#aaa" />
<rect x="134.5" y="901.0" width="9" height="0.8" fill="#aaa" />
<g stroke="#666" stroke-width="1" fill="none" stroke-dasharray="2 1"><line x1="87" y1="935.5" x2="129" y2="935.5"/><line x1="87" y1="952.5" x2="129" y2="952.5"/><line x1="87.5" y1="935" x2="87.5" y2="953"/><line x1="128.5" y1="935" x2="128.5" y2="953"/></g>
<g stroke="#666" stroke-width="1" fill="none" stroke-dasharray="2 1"><line x1="129" y1="939.5" x2="193" y2="939.5"/><line x1="129" y1="970.5" x2="193" y2="970.5"/><line x1="129.5" y1="939" x2="129.5" y2="971"/><line x1="192.5" y1="939" x2="192.5" y2="971"/></g>
<rect x="267.5" y="188.5" width="1308" height="736" fill="#ffffff" stroke="#c3c3c3" stroke-width="1" />
<g stroke="#555" stroke-width="1" fill="none" stroke-dasharray="2 1"><line x1="431" y1="308.5" x2="1413" y2="308.5"/><line x1="431" y1="565.5" x2="1413" y2="565.5"/><line x1="431.5" y1="308" x2="431.5" y2="566"/><line x1="1412.5" y1="308" x2="1412.5" y2="566"/></g>
<g stroke="#555" stroke-width="1" fill="none" stroke-dasharray="2 1"><line x1="431" y1="574.5" x2="1413" y2="574.5"/><line x1="431" y1="753.5" x2="1413" y2="753.5"/><line x1="431.5" y1="574" x2="431.5" y2="754"/><line x1="1412.5" y1="574" x2="1412.5" y2="754"/></g>
<g stroke="#555" stroke-width="1" fill="none" stroke-dasharray="2 1"><line x1="356" y1="870.5" x2="654" y2="870.5"/><line x1="356" y1="910.5" x2="654" y2="910.5"/><line x1="356.5" y1="870" x2="356.5" y2="911"/><line x1="653.5" y1="870" x2="653.5" y2="911"/></g>
<g stroke="#555" stroke-width="1" fill="none" stroke-dasharray="2 1"><line x1="699" y1="870.5" x2="1144" y2="870.5"/><line x1="699" y1="910.5" x2="1144" y2="910.5"/><line x1="699.5" y1="870" x2="699.5" y2="911"/><line x1="1143.5" y1="870" x2="1143.5" y2="911"/></g>
<g stroke="#555" stroke-width="1" fill="none" stroke-dasharray="2 1"><line x1="1189" y1="870.5" x2="1486" y2="870.5"/><line x1="1189" y1="910.5" x2="1486" y2="910.5"/><line x1="1189.5" y1="870" x2="1189.5" y2="911"/><line x1="1485.5" y1="870" x2="1485.5" y2="911"/></g>
<rect x="1592.5" y="180" width="18" height="688" fill="#d6d6d6" />
<rect x="1592.5" y="162.5" width="18" height="18" fill="#ffffff" stroke="#c8c8c8" stroke-width="1" />
<path d="M1596.8 174.3 L1601.5 169 L1606.2 174.3 Z" stroke="none" fill="#606060" stroke-width="1" />
<rect x="1592.5" y="238.5" width="18" height="56" fill="#ffffff" stroke="#c8c8c8" stroke-width="1" />
<rect x="1592.5" y="868.5" width="18" height="18" fill="#ffffff" stroke="#c8c8c8" stroke-width="1" />
<path d="M1596.5 874 L1601.5 879.5 L1606.5 874 Z" stroke="none" fill="#606060" stroke-width="1" />
<path d="M1597 898.5 L1601.5 894 L1606 898.5 Z M1597 903.8 L1601.5 899.3 L1606 903.8 Z" stroke="none" fill="#606060" stroke-width="1" />
<path d="M1597 915 L1601.5 919.5 L1606 915 Z M1597 920.3 L1601.5 924.8 L1606 920.3 Z" stroke="none" fill="#606060" stroke-width="1" />
<rect x="1612" y="160" width="1" height="791" fill="#c6c6c6" />
<path d="M1839.5 183.5 H1851 L1845.25 190.3 Z" stroke="none" fill="#606060" stroke-width="1" />
<path d="M1891.2 181.7 L1902.8 193.3 M1902.8 181.7 L1891.2 193.3" stroke="#404040" fill="none" stroke-width="1.9" />
<rect x="1627.5" y="216.5" width="117" height="30" fill="#ffffff" stroke="#c6c6c6" stroke-width="1" />
<rect x="1749.5" y="216.5" width="83" height="30" fill="#ffffff" stroke="#c6c6c6" stroke-width="1" />
<rect x="1864.5" y="222.5" width="20" height="17.5" fill="#ffffff" stroke="#c6c6c6" stroke-width="1" />
<rect x="1889.5" y="222.5" width="20" height="17.5" fill="#ffffff" stroke="#c6c6c6" stroke-width="1" />
<path d="M1869.5 234 L1874.5 229 L1879.5 234" stroke="#505050" fill="none" stroke-width="1.2" />
<path d="M1894.5 229 L1899.5 234 L1904.5 229" stroke="#505050" fill="none" stroke-width="1.2" />
<path d="M1857.5 277.7 C1858.5 266.09999999999997 1875.5 266.09999999999997 1876.5 277.7" stroke="#303030" fill="none" stroke-width="1.3" />
<circle cx="1867" cy="277.5" r="3.3" fill="none" stroke="#303030" stroke-width="1.3"/>
<path d="M1857.5 301.59999999999997 C1858.5 289.99999999999994 1875.5 289.99999999999994 1876.5 301.59999999999997" stroke="#303030" fill="none" stroke-width="1.3" />
<circle cx="1867" cy="301.4" r="3.3" fill="none" stroke="#303030" stroke-width="1.3"/>
<path d="M1857.5 325.5 C1858.5 313.9 1875.5 313.9 1876.5 325.5" stroke="#303030" fill="none" stroke-width="1.3" />
<circle cx="1867" cy="325.3" r="3.3" fill="none" stroke="#303030" stroke-width="1.3"/>
<path d="M1857.5 349.4 C1858.5 337.79999999999995 1875.5 337.79999999999995 1876.5 349.4" stroke="#303030" fill="none" stroke-width="1.3" />
<circle cx="1867" cy="349.2" r="3.3" fill="none" stroke="#303030" stroke-width="1.3"/>
<path d="M1857.5 373.29999999999995 C1858.5 361.69999999999993 1875.5 361.69999999999993 1876.5 373.29999999999995" stroke="#303030" fill="none" stroke-width="1.3" />
<circle cx="1867" cy="373.09999999999997" r="3.3" fill="none" stroke="#303030" stroke-width="1.3"/>
<rect x="0" y="952" width="1923" height="19" fill="#f3f3f3" />
<line x1="0" y1="951.5" x2="1923" y2="951.5" stroke="#d6d6d6" stroke-width="1" />
<path d="M151.5 971 V959 H157 Q160 959 160 962 V971 M160 962 Q160 959 163 959 H168.5 V967" stroke="#505050" fill="none" stroke-width="1.4" />
<path d="M164 970 L169.5 965" stroke="#505050" fill="none" stroke-width="1.4" />
<path d="M327 958.3 A7.5 7.5 0 0 0 322.3 971.5" stroke="#505050" fill="none" stroke-width="1.3" stroke-dasharray="2.2 1.2"/>
<path d="M329.5 956.8 V965.5 M327.3 963.2 L329.5 965.5 L331.7 963.2 M334.5 967.2 L337.5 970.2 L340.5 966.8 M338.3 960.5 V965 M336 962.8 H340.6" stroke="#505050" fill="none" stroke-width="1.3" />
<rect x="1496.5" y="958.5" width="17" height="14" fill="none" stroke="#505050" stroke-width="1.5" />
<rect x="1501" y="962" width="9" height="4" fill="none" stroke="#505050" stroke-width="1.5" />
<rect x="1546.8" y="959.5" width="6.8" height="5.5" fill="none" stroke="#505050" stroke-width="1.5" />
<rect x="1546.8" y="967.5" width="6.8" height="5.5" fill="none" stroke="#505050" stroke-width="1.5" />
<rect x="1556.3" y="959.5" width="6.8" height="5.5" fill="none" stroke="#505050" stroke-width="1.5" />
<rect x="1556.3" y="967.5" width="6.8" height="5.5" fill="none" stroke="#505050" stroke-width="1.5" />
<path d="M1597 960 H1604.5 V972 M1604.5 960 H1612 V972 M1597 960 V972" stroke="#505050" fill="none" stroke-width="1.5" />
<path d="M1599.5 963.5 H1602 M1599.5 967 H1602 M1607 963.5 H1609.5 M1607 967 H1609.5" stroke="#505050" fill="none" stroke-width="1.2" />
<path d="M1646.5 959.5 H1662.5 M1648 959.5 V968 H1661 V959.5 M1654.5 968 V972 M1651.5 963.5 H1657.5" stroke="#505050" fill="none" stroke-width="1.5" />
<line x1="1687" y1="965.5" x2="1696.5" y2="965.5" stroke="#505050" stroke-width="1.3" />
<line x1="1703" y1="966" x2="1828" y2="966" stroke="#b0b0b0" stroke-width="1" />
<line x1="1765.5" y1="962" x2="1765.5" y2="970" stroke="#b0b0b0" stroke-width="1" />
<rect x="1751.5" y="959.5" width="5" height="12" fill="#707070" />
<path d="M1833.5 965.5 H1843.5 M1838.5 960.5 V970.5" stroke="#505050" fill="none" stroke-width="1.3" />
<path d="M1903 962.5 L1900 966 L1903 969.5 M1915.5 962.5 L1918.5 966 L1915.5 969.5 M1906 963.5 H1912.5 V971 H1906 Z M1907 960 L1909.2 957.8 L1911.4 960" stroke="#505050" fill="none" stroke-width="1.3" />
<text x="25.40" y="26.5" font-family="'Liberation Sans', sans-serif" font-size="17" fill="#444" textLength="27.43" lengthAdjust="spacingAndGlyphs">Tệp</text>
<text x="86.41" y="26.5" font-family="'Liberation Sans', sans-serif" font-size="17" fill="#444" textLength="149.04" lengthAdjust="spacingAndGlyphs">Bản cái Trang chiếu</text>
<text x="263.50" y="26.5" font-family="'Liberation Sans', sans-serif" font-size="17" fill="#444" textLength="76.25" lengthAdjust="spacingAndGlyphs">Trang đầu</text>
<text x="367.70" y="26.5" font-family="'Liberation Sans', sans-serif" font-size="17" fill="#444" textLength="38.73" lengthAdjust="spacingAndGlyphs">Chèn</text>
<text x="434.30" y="26.5" font-family="'Liberation Sans', sans-serif" font-size="17" fill="#444" textLength="92.16" lengthAdjust="spacingAndGlyphs">Chuyển tiếp</text>
<text x="553.98" y="26.5" font-family="'Liberation Sans', sans-serif" font-size="17" fill="#444" textLength="75.49" lengthAdjust="spacingAndGlyphs">Hoạt hình</text>
<text x="658.00" y="26.5" font-family="'Liberation Sans', sans-serif" font-size="17" fill="#444" textLength="56.78" lengthAdjust="spacingAndGlyphs">Xem lại</text>
<text x="804.00" y="26.5" font-family="'Liberation Sans', sans-serif" font-size="17" fill="#444" textLength="62.45" lengthAdjust="spacingAndGlyphs">Trợ giúp</text>
<text x="742.00" y="26.5" font-family="'Liberation Sans', sans-serif" font-size="17" font-weight="bold" stroke="#f3f2f1" stroke-width="0.35" fill="#262626" textLength="34.61" lengthAdjust="spacingAndGlyphs">Xem</text>
<text x="21.60" y="104.5" font-family="'Liberation Sans', sans-serif" font-size="15" fill="#444444" textLength="39.92" lengthAdjust="spacingAndGlyphs">Thông</text>
<text x="17.30" y="124.5" font-family="'Liberation Sans', sans-serif" font-size="15" fill="#444444" textLength="47.33" lengthAdjust="spacingAndGlyphs">thường</text>
<text x="69.50" y="104.5" font-family="'Liberation Sans', sans-serif" font-size="15" fill="#444444" textLength="68.19" lengthAdjust="spacingAndGlyphs">Dạng xem</text>
<text x="77.49" y="124.5" font-family="'Liberation Sans', sans-serif" font-size="15" fill="#444444" textLength="52.04" lengthAdjust="spacingAndGlyphs">Dàn bài</text>
<text x="144.32" y="104.5" font-family="'Liberation Sans', sans-serif" font-size="15" fill="#444444" textLength="73.62" lengthAdjust="spacingAndGlyphs">Bộ sắp xếp</text>
<text x="144.00" y="124.5" font-family="'Liberation Sans', sans-serif" font-size="15" fill="#444444" textLength="74.62" lengthAdjust="spacingAndGlyphs">Trang chiếu</text>
<text x="231.00" y="104.5" font-family="'Liberation Sans', sans-serif" font-size="15" fill="#444444" textLength="35.31" lengthAdjust="spacingAndGlyphs">Trang</text>
<text x="224.70" y="124.5" font-family="'Liberation Sans', sans-serif" font-size="15" fill="#444444" textLength="48.02" lengthAdjust="spacingAndGlyphs">Ghi chú</text>
<text x="289.71" y="104.5" font-family="'Liberation Sans', sans-serif" font-size="15" fill="#444444" textLength="35.63" lengthAdjust="spacingAndGlyphs">Dạng</text>
<text x="278.00" y="124.5" font-family="'Liberation Sans', sans-serif" font-size="15" fill="#444444" textLength="58.51" lengthAdjust="spacingAndGlyphs">xem Đọc</text>
<text x="107.50" y="154" font-family="'Liberation Sans', sans-serif" font-size="12" fill="#444" textLength="138.50" lengthAdjust="spacingAndGlyphs">Dạng xem Bản trình bày</text>
<text x="379.86" y="104.5" font-family="'Liberation Sans', sans-serif" font-size="15" fill="#444444" textLength="24.96" lengthAdjust="spacingAndGlyphs">Bản</text>
<text x="362.60" y="124.5" font-family="'Liberation Sans', sans-serif" font-size="15" fill="#444444" textLength="59.32" lengthAdjust="spacingAndGlyphs">chiếu Cái</text>
<text x="427.04" y="104.5" font-family="'Liberation Sans', sans-serif" font-size="15" fill="#444444" textLength="61.59" lengthAdjust="spacingAndGlyphs">Bản phân</text>
<text x="431.50" y="124.5" font-family="'Liberation Sans', sans-serif" font-size="15" fill="#444444" textLength="54.73" lengthAdjust="spacingAndGlyphs">phát Cái</text>
<text x="493.51" y="104.5" font-family="'Liberation Sans', sans-serif" font-size="15" fill="#444444" textLength="50.11" lengthAdjust="spacingAndGlyphs">Bản ghi</text>
<text x="495.50" y="124.5" font-family="'Liberation Sans', sans-serif" font-size="15" fill="#444444" textLength="47.51" lengthAdjust="spacingAndGlyphs">chú Cái</text>
<text x="400.60" y="154" font-family="'Liberation Sans', sans-serif" font-size="12" fill="#444" textLength="103.91" lengthAdjust="spacingAndGlyphs">Dạng xem Bản cái</text>
<text x="593.30" y="62.8" font-family="'Liberation Sans', sans-serif" font-size="15" fill="#444444" textLength="40.25" lengthAdjust="spacingAndGlyphs">Thước</text>
<text x="593.30" y="91.7" font-family="'Liberation Sans', sans-serif" font-size="15" fill="#444444" textLength="75.72" lengthAdjust="spacingAndGlyphs">Đường lưới</text>
<text x="593.30" y="120.7" font-family="'Liberation Sans', sans-serif" font-size="15" fill="#444444" textLength="72.63" lengthAdjust="spacingAndGlyphs">Đường căn</text>
<text x="693.40" y="104.5" font-family="'Liberation Sans', sans-serif" font-size="15" fill="#a6a6a6" textLength="21.30" lengthAdjust="spacingAndGlyphs">Ghi</text>
<text x="692.80" y="124.5" font-family="'Liberation Sans', sans-serif" font-size="15" fill="#a6a6a6" textLength="21.91" lengthAdjust="spacingAndGlyphs">chú</text>
<text x="615.50" y="154" font-family="'Liberation Sans', sans-serif" font-size="12" fill="#444" textLength="44.02" lengthAdjust="spacingAndGlyphs">Hiển thị</text>
<text x="764.80" y="104.5" font-family="'Liberation Sans', sans-serif" font-size="15" fill="#444444" textLength="22.90" lengthAdjust="spacingAndGlyphs">Thu</text>
<text x="754.60" y="124.5" font-family="'Liberation Sans', sans-serif" font-size="15" fill="#444444" textLength="41.84" lengthAdjust="spacingAndGlyphs">phóng</text>
<text x="804.00" y="104.5" font-family="'Liberation Sans', sans-serif" font-size="15" fill="#444444" textLength="49.91" lengthAdjust="spacingAndGlyphs">Vừa với</text>
<text x="807.00" y="124.5" font-family="'Liberation Sans', sans-serif" font-size="15" fill="#444444" textLength="44.71" lengthAdjust="spacingAndGlyphs">Cửa sổ</text>
<text x="771.40" y="154" font-family="'Liberation Sans', sans-serif" font-size="12" fill="#444" textLength="62.64" lengthAdjust="spacingAndGlyphs">Thu phóng</text>
<text x="904.28" y="64.7" font-family="'Liberation Sans', sans-serif" font-size="15" fill="#444444" textLength="29.77" lengthAdjust="spacingAndGlyphs">Màu</text>
<text x="905.00" y="94.6" font-family="'Liberation Sans', sans-serif" font-size="15" fill="#444444" textLength="79.49" lengthAdjust="spacingAndGlyphs">Cấp độ xám</text>
<text x="905.00" y="124.4" font-family="'Liberation Sans', sans-serif" font-size="15" fill="#444444" textLength="86.53" lengthAdjust="spacingAndGlyphs">Đen và Trắng</text>
<text x="887.00" y="154" font-family="'Liberation Sans', sans-serif" font-size="12" fill="#444" textLength="101.30" lengthAdjust="spacingAndGlyphs">Màu/Cấp độ xám</text>
<text x="1034.30" y="104.5" font-family="'Liberation Sans', sans-serif" font-size="15" fill="#444444" textLength="24.45" lengthAdjust="spacingAndGlyphs">Cửa</text>
<text x="1024.40" y="124.5" font-family="'Liberation Sans', sans-serif" font-size="15" fill="#444444" textLength="44.62" lengthAdjust="spacingAndGlyphs">sổ Mới</text>
<text x="1101.80" y="64.3" font-family="'Liberation Sans', sans-serif" font-size="15" fill="#444444" textLength="94.88" lengthAdjust="spacingAndGlyphs">Sắp xếp Tất cả</text>
<text x="1101.80" y="94.3" font-family="'Liberation Sans', sans-serif" font-size="15" fill="#444444" textLength="58.94" lengthAdjust="spacingAndGlyphs">Xếp tầng</text>
<text x="1100.82" y="124.3" font-family="'Liberation Sans', sans-serif" font-size="15" fill="#444444" textLength="128.01" lengthAdjust="spacingAndGlyphs">Di chuyển Dấu tách</text>
<text x="1145.40" y="154" font-family="'Liberation Sans', sans-serif" font-size="12" fill="#444" textLength="39.67" lengthAdjust="spacingAndGlyphs">Cửa sổ</text>
<text x="1257.20" y="104.5" font-family="'Liberation Sans', sans-serif" font-size="15" fill="#444444" textLength="47.92" lengthAdjust="spacingAndGlyphs">Chuyển</text>
<text x="1251.00" y="124.5" font-family="'Liberation Sans', sans-serif" font-size="15" fill="#444444" textLength="46.83" lengthAdjust="spacingAndGlyphs">Cửa sổ</text>
<text x="1337.59" y="104.5" font-family="'Liberation Sans', sans-serif" font-size="15" fill="#444444" textLength="42.16" lengthAdjust="spacingAndGlyphs">Macro</text>
<text x="1339.40" y="154" font-family="'Liberation Sans', sans-serif" font-size="12" fill="#444" textLength="36.44" lengthAdjust="spacingAndGlyphs">Macro</text>
<text x="1843.50" y="26.9" font-family="'Liberation Sans', sans-serif" font-size="17" font-weight="bold" stroke="#ffffff" stroke-width="0.35" fill="#a4373a" textLength="54.51" lengthAdjust="spacingAndGlyphs">Chia sẻ</text>
<text x="96.80" y="211" font-family="'Liberation Serif', serif" font-size="7.6" stroke="#4a4a4a" stroke-width="0.25" fill="#4a4a4a" textLength="84.60" lengthAdjust="spacingAndGlyphs">Bấm để sửa kiểu tiêu đề Bản</text>
<text x="137.00" y="218.5" font-family="'Liberation Serif', serif" font-size="7.6" stroke="#4a4a4a" stroke-width="0.25" fill="#4a4a4a" textLength="8.10" lengthAdjust="spacingAndGlyphs">cái</text>
<text x="89.00" y="291.0" font-family="'Liberation Serif', serif" font-size="6.6" stroke="#4a4a4a" stroke-width="0.25" fill="#4a4a4a" textLength="69.86" lengthAdjust="spacingAndGlyphs">Bấm để sửa kiểu tiêu đề Bản cái</text>
<text x="88.50" y="415.0" font-family="'Liberation Serif', serif" font-size="7.4" stroke="#4a4a4a" stroke-width="0.25" fill="#4a4a4a" textLength="87.05" lengthAdjust="spacingAndGlyphs">Bấm để sửa kiểu tiêu đề Bản cái</text>
<text x="89.00" y="477.0" font-family="'Liberation Serif', serif" font-size="6.6" stroke="#4a4a4a" stroke-width="0.25" fill="#4a4a4a" textLength="69.86" lengthAdjust="spacingAndGlyphs">Bấm để sửa kiểu tiêu đề Bản cái</text>
<text x="89.00" y="569.3" font-family="'Liberation Serif', serif" font-size="6.6" stroke="#4a4a4a" stroke-width="0.25" fill="#4a4a4a" textLength="69.86" lengthAdjust="spacingAndGlyphs">Bấm để sửa kiểu tiêu đề Bản cái</text>
<text x="89.00" y="663.8" font-family="'Liberation Serif', serif" font-size="6.6" stroke="#4a4a4a" stroke-width="0.25" fill="#4a4a4a" textLength="69.86" lengthAdjust="spacingAndGlyphs">Bấm để sửa kiểu tiêu đề Bản cái</text>
<text x="89.50" y="849.5" font-family="'Liberation Serif', serif" font-size="5.6" stroke="#4a4a4a" stroke-width="0.25" fill="#4a4a4a" textLength="34.67" lengthAdjust="spacingAndGlyphs">Bấm để sửa kiểu tiêu đề</text>
<text x="89.50" y="854.5" font-family="'Liberation Serif', serif" font-size="5.6" stroke="#4a4a4a" stroke-width="0.25" fill="#4a4a4a" textLength="13.64" lengthAdjust="spacingAndGlyphs">Bản cái</text>
<text x="89.50" y="943.0" font-family="'Liberation Serif', serif" font-size="5.6" stroke="#4a4a4a" stroke-width="0.25" fill="#4a4a4a" textLength="34.67" lengthAdjust="spacingAndGlyphs">Bấm để sửa kiểu tiêu đề</text>
<text x="89.50" y="948.0" font-family="'Liberation Serif', serif" font-size="5.6" stroke="#4a4a4a" stroke-width="0.25" fill="#4a4a4a" textLength="13.64" lengthAdjust="spacingAndGlyphs">Bản cái</text>
<text x="131.50" y="943.0" font-family="'Liberation Serif', serif" font-size="5.2" stroke="#4a4a4a" stroke-width="0.25" fill="#4a4a4a" textLength="7.65" lengthAdjust="spacingAndGlyphs">Ảnh</text>
<text x="451.81" y="452.8" font-family="'Liberation Serif', serif" font-size="82" fill="#000" textLength="937.69" lengthAdjust="spacingAndGlyphs">Bấm để sửa kiểu tiêu đề Bản</text>
<text x="873.05" y="538.8" font-family="'Liberation Serif', serif" font-size="82" fill="#000" textLength="94.02" lengthAdjust="spacingAndGlyphs">cái</text>
<text x="578.42" y="606.8" font-family="'Liberation Sans', sans-serif" font-size="33" fill="#000" textLength="684.90" lengthAdjust="spacingAndGlyphs">Bấm để chỉnh sửa kiểu tiêu đề phụ của Bản cái</text>
<text x="367.48" y="895" font-family="'Liberation Sans', sans-serif" font-size="14" fill="#808080" textLength="78.28" lengthAdjust="spacingAndGlyphs">10/18/2025</text>
<text x="881.50" y="895.5" font-family="'Liberation Sans', sans-serif" font-size="16.5" fill="#808080" textLength="79.87" lengthAdjust="spacingAndGlyphs">Chân trang</text>
<text x="1456.00" y="895" font-family="'Liberation Sans', sans-serif" font-size="14" stroke="#7a7a7a" stroke-width="0.35" fill="#7a7a7a" textLength="17.95" lengthAdjust="spacingAndGlyphs">‹#›</text>
<text x="1626.56" y="198.2" font-family="'Liberation Sans', sans-serif" font-size="26" stroke="#e6e6e6" stroke-width="0.45" fill="#a2392c" textLength="106.86" lengthAdjust="spacingAndGlyphs">Lựa chọn</text>
<text x="1637.51" y="236.5" font-family="'Liberation Sans', sans-serif" font-size="15" fill="#444" textLength="95.54" lengthAdjust="spacingAndGlyphs">Hiển thị Tất cả</text>
<text x="1760.60" y="236.5" font-family="'Liberation Sans', sans-serif" font-size="15" fill="#444" textLength="60.38" lengthAdjust="spacingAndGlyphs">Ẩn Tất cả</text>
<text x="1651.30" y="281.7" font-family="'Liberation Sans', sans-serif" font-size="15" fill="#444" textLength="192.50" lengthAdjust="spacingAndGlyphs">Chỗ dành sẵn cho Số hiệu B...</text>
<text x="1651.30" y="305.59999999999997" font-family="'Liberation Sans', sans-serif" font-size="15" fill="#444" textLength="193.20" lengthAdjust="spacingAndGlyphs">Chỗ dành sẵn cho Chân tran...</text>
<text x="1651.30" y="329.5" font-family="'Liberation Sans', sans-serif" font-size="15" fill="#444" textLength="190.42" lengthAdjust="spacingAndGlyphs">Chỗ dành sẵn cho Ngày thá...</text>
<text x="1651.30" y="353.4" font-family="'Liberation Sans', sans-serif" font-size="15" fill="#444" textLength="89.23" lengthAdjust="spacingAndGlyphs">Tiêu đề phụ 2</text>
<text x="1651.30" y="377.29999999999995" font-family="'Liberation Sans', sans-serif" font-size="15" fill="#444" textLength="59.73" lengthAdjust="spacingAndGlyphs">Tiêu đề 1</text>
<text x="14.42" y="971" font-family="'Liberation Sans', sans-serif" font-size="13" fill="#444" textLength="113.11" lengthAdjust="spacingAndGlyphs">Bản cái Trang chiếu</text>
<text x="191.00" y="971" font-family="'Liberation Sans', sans-serif" font-size="13" fill="#444" textLength="109.62" lengthAdjust="spacingAndGlyphs">Tiếng Anh (Hoa Kỳ)</text>
<text x="344.50" y="971" font-family="'Liberation Sans', sans-serif" font-size="13" fill="#444" textLength="129.24" lengthAdjust="spacingAndGlyphs">Trợ năng: Cần điều tra</text>
<text x="1860.00" y="971" font-family="'Liberation Sans', sans-serif" font-size="13" fill="#555" textLength="23.90" lengthAdjust="spacingAndGlyphs">82%</text>
<rect x="2.5" y="42.5" width="83" height="102.3" fill="none" stroke="#e41c1c" stroke-width="5" />
<rect x="0" y="0" width="4.4" height="38.5" fill="#c9c9cb" />
<rect x="0" y="31" width="4.4" height="7.5" fill="#d9cfe3" />
<rect x="0" y="148" width="4.4" height="4" fill="#6f7480" />
<rect x="726.8" y="11.8" width="68.2" height="37.2" fill="none" stroke="#e41c1c" stroke-width="4.6" />
<rect x="77.5" y="184.8" width="123" height="70.7" fill="none" stroke="#bc4529" stroke-width="3" />
</svg>
</body></html>
